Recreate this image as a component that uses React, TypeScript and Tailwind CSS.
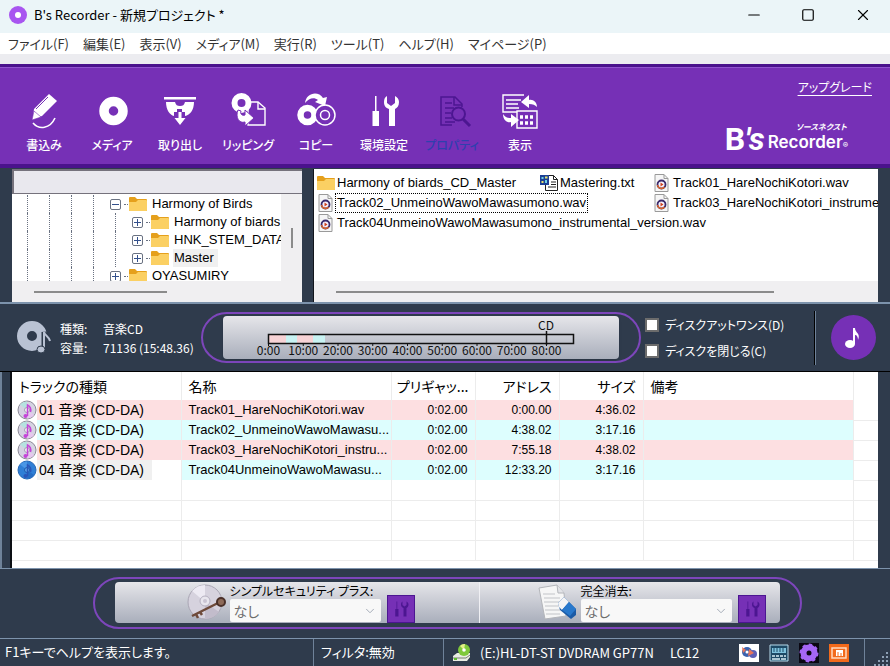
import React from 'react';
import { ChevronDown, Minus, Square, X } from 'lucide-react';

const MENU_ITEMS = [
  'ファイル(F)',
  '編集(E)',
  '表示(V)',
  'メディア(M)',
  '実行(R)',
  'ツール(T)',
  'ヘルプ(H)',
  'マイページ(P)',
];

interface Track {
  no: string;
  name: string;
  pregap: string;
  address: string;
  size: string;
}

const TRACKS: Track[] = [
  { no: '01', name: 'Track01_HareNochiKotori.wav', pregap: '0:02.00', address: '0:00.00', size: '4:36.02' },
  { no: '02', name: 'Track02_UnmeinoWawoMawasu...', pregap: '0:02.00', address: '4:38.02', size: '3:17.16' },
  { no: '03', name: 'Track03_HareNochiKotori_instru...', pregap: '0:02.00', address: '7:55.18', size: '4:38.02' },
  { no: '04', name: 'Track04UnmeinoWawoMawasu...', pregap: '0:02.00', address: '12:33.20', size: '3:17.16' },
];

const LATIN = "font-['Liberation_Sans','Noto_Sans_CJK_JP',sans-serif]";

const WriteIcon = () => (
  <svg className="size-10" viewBox="0 0 40 40" fill="none">
    <path d="M10 18 25 3l8 7-15 15-9 3z" fill="#fff" />
    <path d="M24 6 12 18" stroke="#7630b6" strokeWidth="1" />
    <path d="m8 29 2-9 7 6z" fill="#fff" stroke="#7630b6" strokeWidth=".6" />
    <path d="M9 32c6 7 17 6 22-5" stroke="#fff" strokeWidth="1.6" />
  </svg>
);

const MediaIcon = () => (
  <svg className="size-10" viewBox="0 0 40 40" fill="none">
    <circle cx="21.500" cy="20" r="9.5" stroke="#fff" strokeWidth="9.5" />
  </svg>
);

const EjectIcon = () => (
  <svg className="size-10" viewBox="0 0 40 40" fill="#fff">
    <path d="M4 6h32v2.500H4zM6 11h9c1 3 2 4 5 4s4-1 5-4h9c0 8-4 13-9 14v-4h-3v-3h-5v3h-3v4C10 24 6 19 6 11z" />
    <path d="M18.500 21h3v6h4l-5.500 7-5.500-7h4z" />
  </svg>
);

const RipIcon = () => (
  <svg className="size-10" viewBox="0 0 40 40" fill="none">
    <path d="M22 11h8l7 6v17H20V14" stroke="#fff" strokeWidth="1.400" />
    <path d="M30 11v7h7" stroke="#fff" strokeWidth="1.400" />
    <circle cx="13.500" cy="12" r="7" stroke="#fff" strokeWidth="6" />
    <path d="M10 19c-3 7 1 14 7 12v4l9-8-9-8v5c-3 1-5-1-4-4z" fill="#fff" stroke="#7630b6" strokeWidth="1" />
  </svg>
);

const CopyIcon = () => (
  <svg className="size-10" viewBox="0 0 40 40" fill="none">
    <circle cx="11.500" cy="24" r="7" stroke="#fff" strokeWidth="6.500" />
    <circle cx="29" cy="24" r="10" fill="#7630b6" stroke="#fff" strokeWidth="1.500" />
    <circle cx="29" cy="24" r="4.500" stroke="#fff" strokeWidth="1.500" />
    <path d="M9 12C10 2 22-1 27 7l4-1-2 9-10-4 3-2C18 6 13 7 9 12z" fill="#fff" />
  </svg>
);

const ToolsIcon = ({ className, color }: { className: string; color: string }) => (
  <svg className={className} viewBox="0 0 40 40" fill={color}>
    <path d="M11 5h1.500v15h2.500v15H8.500V20H11z" />
    <path d="M25 35V18c-3-1-5-3-5-7 0-3 1-5 3-6v7l4 3 4-3V5c2 1 4 3 4 6 0 4-2 6-4 7v17z" />
  </svg>
);

const PropertyIcon = () => (
  <svg className="size-10" viewBox="0 0 40 40" fill="none" stroke="#4c1691">
    <path d="M20 34H9V6h14l7 7v3" strokeWidth="1.500" />
    <path d="M22 6v8h8M13 12h7M13 17h9M13 22h6M13 27h7M13 31h10" strokeWidth="1.500" />
    <circle cx="26.500" cy="23" r="6.500" strokeWidth="2" />
    <path d="m31 28 7 7" strokeWidth="3" />
  </svg>
);

const ViewIcon = () => (
  <svg className="size-10" viewBox="0 0 40 40" fill="none" stroke="#fff" strokeWidth="1.400">
    <path d="M24 4H3v17h14M6 9h15M6 13h12M6 17h13" />
    <path d="M17 20h20v17H17z" />
    <path d="M20 26h3m2 0h3m2 0h3M20 32h3m2 0h3m2 0h3" strokeWidth="3.500" />
    <path d="M37 16c0-5-4-8-8-7V4l-8 7 8 6v-4c4 0 6 1 8 3z" fill="#fff" stroke="none" />
    <path d="M3 23c0 7 5 9 8 8v5l8-7-8-6v4c-4 0-6-1-8-4z" fill="#fff" stroke="none" />
  </svg>
);

const TOOLBAR = [
  { label: '書込み', icon: <WriteIcon /> },
  { label: 'メディア', icon: <MediaIcon /> },
  { label: '取り出し', icon: <EjectIcon /> },
  { label: 'リッピング', icon: <RipIcon /> },
  { label: 'コピー', icon: <CopyIcon /> },
  { label: '環境設定', icon: <ToolsIcon className="size-10" color="#fff" /> },
  { label: 'プロパティ', icon: <PropertyIcon />, disabled: true },
  { label: '表示', icon: <ViewIcon /> },
];

const FolderIcon = () => (
  <svg className="h-[18px] w-5 shrink-0" viewBox="0 0 20 18">
    <path d="M1 3q0-1 1-1h5l2 2h9q1 0 1 1v10q0 1-1 1H2q-1 0-1-1z" fill="#e5a01c" />
    <path d="M1 7h7l2-2h8q1 0 1 1v9q0 1-1 1H2q-1 0-1-1z" fill="#fbd063" />
  </svg>
);

const WavIcon = () => (
  <svg className="h-[18px] w-5 shrink-0" viewBox="0 0 20 18">
    <path d="M3 .5h9l4 4v13H3z" fill="#f6f6f6" stroke="#9a9a9a" />
    <path d="M12 .5v4h4" fill="none" stroke="#9a9a9a" />
    <circle cx="9.500" cy="10.500" r="4" fill="#f4f0ff" stroke="#3b2a6b" strokeWidth="1.800" />
    <path d="M5.500 11a4 4 0 0 0 7 2" fill="none" stroke="#d9642b" strokeWidth="1.600" />
    <path d="m8.500 8.500 3 2-3 2z" fill="#d0421b" />
  </svg>
);

const TxtIcon = () => (
  <svg className="h-[18px] w-5 shrink-0" viewBox="0 0 20 18">
    <path d="M6.500 1.500h8l4 4v11h-12z" fill="#fff" stroke="#222" />
    <path d="M14.500 1.500v4h4M12 8h5M12 10.500h5M9 13h8" fill="none" stroke="#222" />
    <path d="M1 1h9v10H1z" fill="#1c3f94" />
    <path d="M2.500 3h2v2h-2zM6 6h2v3H6z" fill="#6fd3e8" />
    <path d="M6 2.500h2.500v2H6zM2.500 7h2v2h-2z" fill="#e8e46f" />
  </svg>
);

const DiscIcon = ({ selected }: { selected?: boolean }) => (
  <svg className="size-5 shrink-0" viewBox="0 0 20 20">
    <circle cx="10" cy="10" r="9" fill={selected ? '#2f7fd6' : '#d5d3e2'} stroke={selected ? '#2567b5' : '#8d8a96'} />
    <path d="M10 10 3 4.500A9 9 0 0 1 10 1.500z" fill={selected ? '#4a97e6' : '#b6e3e0'} />
    <path d="m10 10 7 5a9 9 0 0 1-7 3.500z" fill={selected ? '#256dc4' : '#e6c8ee'} />
    <circle cx="10" cy="10" r="2.500" fill={selected ? '#5da3ea' : '#f4f2f8'} stroke={selected ? '#1f5cab' : '#a59fb4'} />
    <path d="M10.500 16V5c2 1 4 3 3 7" fill="none" stroke={selected ? '#2a56b8' : '#c445d8'} strokeWidth="1.500" />
    <circle cx="8.500" cy="16" r="2" fill={selected ? '#2a56b8' : '#c445d8'} />
  </svg>
);

const TREE = [
  { label: 'Harmony of Birds', depth: 4, open: true },
  { label: 'Harmony of biards', depth: 5 },
  { label: 'HNK_STEM_DATA', depth: 5 },
  { label: 'Master', depth: 5, selected: true },
  { label: 'OYASUMIRY', depth: 4 },
];

const FolderTree = () => (
  <div className={`flex w-[290px] shrink-0 flex-col bg-[#f0eff1] ${LATIN}`}>
    <div className="h-[25px] border-t-2 border-b border-l-2 border-[#75727c] bg-[#e9e8ee]" />
    <div className="flex">
      <ul className="h-[87px] flex-1 overflow-hidden bg-white pt-px pl-1">
        {TREE.map((node) => (
          <li key={node.label} className="flex h-[18px] items-center text-[13px] leading-[18px] whitespace-nowrap">
            {Array.from({ length: node.depth }, (_, i) => (
              <span key={i} className="flex h-full w-[22px] shrink-0 justify-center">
                <span className="border-l border-dotted border-gray-500" />
              </span>
            ))}
            <button
              aria-label={node.label}
              className="mr-[3px] ml-[6px] flex size-[11px] shrink-0 items-center justify-center rounded-xs border border-gray-500 bg-white"
            >
              <svg className="size-[7px]" viewBox="0 0 7 7" stroke="#33508c">
                <path d={node.open ? 'M0 3.500h7' : 'M0 3.500h7M3.500 0v7'} />
              </svg>
            </button>
            <span className="w-1 shrink-0 border-t border-dotted border-gray-500" />
            <FolderIcon />
            <span className={`ml-[3px] px-px ${node.selected ? 'bg-[#f0f0f0] pr-1' : ''}`}>{node.label}</span>
          </li>
        ))}
      </ul>
      <div className="flex w-[21px] items-center justify-center pt-0">
        <div className="h-5 w-0.5 bg-[#8b8b8b]" />
      </div>
    </div>
    <div className="flex h-[21px] items-center pl-[22px]">
      <div className="h-0.5 w-[133px] bg-[#8b8b8b]" />
    </div>
  </div>
);

const FileItem = ({ icon, name, focused }: { icon: React.ReactNode; name: string; focused?: boolean }) => (
  <li className="flex h-5 min-w-0 items-center whitespace-nowrap">
    {icon}
    <span className={`px-px leading-[18px] ${focused ? 'outline-1 outline-dotted outline-black' : ''}`}>{name}</span>
  </li>
);

const FileList = () => (
  <div
    className={`flex min-w-0 flex-1 flex-col justify-between overflow-hidden border-l border-[#11151c] bg-white ${LATIN}`}
  >
    <ul className="grid grid-cols-[223px_113px_1fr] pt-1 pl-0.5 text-[13px]">
      <FileItem icon={<FolderIcon />} name="Harmony of biards_CD_Master" />
      <FileItem icon={<TxtIcon />} name="Mastering.txt" />
      <FileItem icon={<WavIcon />} name="Track01_HareNochiKotori.wav" />
      <FileItem icon={<WavIcon />} name="Track02_UnmeinoWawoMawasumono.wav" focused />
      <li />
      <FileItem icon={<WavIcon />} name="Track03_HareNochiKotori_instrumental_version.wav" />
      <FileItem icon={<WavIcon />} name="Track04UnmeinoWawoMawasumono_instrumental_version.wav" />
    </ul>
    <div className="flex h-[21px] items-center bg-[#f0eff1] px-[22px]">
      <div className="h-0.5 w-[438px] bg-[#8b8b8b]" />
    </div>
  </div>
);

const MARKS = ['0:00', '10:00', '20:00', '30:00', '40:00', '50:00', '60:00', '70:00', '80:00'];

const CapacityGauge = () => (
  <div className="rounded-full border-2 border-[#7d46bb] px-5 py-0.5">
    <div className="rounded-sm bg-linear-to-b from-[#e6e6ea] to-[#a9aebb] shadow">
      <svg className="h-[43px] w-[396px]" viewBox="0 0 396 43">
        <path d="M46 19h17v8H46zM79 19h17v8H79z" fill="#f7d3d6" />
        <path d="M63 19h11v8H63zM90 19h12v8H90z" fill="#c9f3f3" />
        <path d="M74 19h16v8H74z" fill="#f7d3d6" />
        <path d="M45.500 18.500h305v9h-305z" fill="none" stroke="#111" strokeWidth="1.500" />
        <path d="M323.500 15v14" stroke="#111" strokeWidth="1.500" />
        {MARKS.map((mark, i) => (
          <g key={mark}>
            <path d={`M${45.5 + i * 34.75} 27v3`} stroke="#111" />
            <text x={45.5 + i * 34.75} y="39" textAnchor="middle" fontSize="12" fill="#111">
              {mark}
            </text>
          </g>
        ))}
        <text x="323" y="14" textAnchor="middle" fontSize="12" fill="#111">
          CD
        </text>
      </svg>
    </div>
  </div>
);

const DiscInfo = () => (
  <section className="flex h-[67px] items-center bg-[#2f3b4c] text-xs text-white">
    <svg className="ml-4 size-9 shrink-0" viewBox="0 0 36 36" fill="none">
      <circle cx="16" cy="16" r="10" stroke="#b9c2d3" strokeWidth="10" />
      <path d="M28 29V12c1 4 5 4 6 11" stroke="#2f3b4c" strokeWidth="5" />
      <path d="M28 29V12c1 4 5 4 6 9" stroke="#b9c2d3" strokeWidth="2" />
      <ellipse cx="25" cy="29.500" rx="4" ry="3.500" fill="#b9c2d3" stroke="#2f3b4c" />
    </svg>
    <dl className="ml-2 grid w-[141px] shrink-0 grid-cols-[43px_1fr] leading-[19px] whitespace-nowrap">
      <dt>種類:</dt>
      <dd>音楽CD</dd>
      <dt>容量:</dt>
      <dd>71136 (15:48.36)</dd>
    </dl>
    <CapacityGauge />
    <div className="ml-1 flex flex-col gap-[7px]">
      {['ディスクアットワンス(D)', 'ディスクを閉じる(C)'].map((label) => (
        <label key={label} className="flex items-center gap-[6px] text-xs leading-[19px] whitespace-nowrap">
          <input type="checkbox" className="size-[14px] appearance-none border-2 border-[#6c6c6c] bg-white" />
          {label}
        </label>
      ))}
    </div>
    <div className="mr-[14px] ml-auto flex items-center gap-[15px]">
      <div className="h-[54px] w-0.5 border-l border-black bg-[#6f8299]" />
      <button aria-label="音楽CD" className="flex size-[45px] items-center justify-center rounded-full bg-[#7630b6]">
        <svg className="size-7" viewBox="0 0 28 28" fill="#fff">
          <ellipse cx="10" cy="20" rx="5" ry="4" />
          <path d="M13 20V4h2c0 5 6 5 3 12 0-3-1-5-3-5v9z" />
        </svg>
      </button>
    </div>
  </section>
);

const CELL = 'border-r border-[#ececec]';

const TrackTable = () => (
  <div className="min-w-0 flex-1 overflow-hidden bg-white">
    <table className="w-full table-fixed border-collapse text-sm whitespace-nowrap">
      <colgroup>
        <col className="w-[169px]" />
        <col className="w-[210px]" />
        <col className="w-[84px]" />
        <col className="w-[84px]" />
        <col className="w-[84px]" />
        <col />
        <col className="w-[25px]" />
      </colgroup>
      <thead>
        <tr className="h-7 [&>th]:font-normal">
          <th className={`${CELL} pl-[7px] text-left`}>トラックの種類</th>
          <th className={`${CELL} pl-[7px] text-left`}>名称</th>
          <th className={`${CELL} pr-[6px] text-right`}>プリギャッ...</th>
          <th className={`${CELL} pr-[7px] text-right`}>アドレス</th>
          <th className={`${CELL} pr-[7px] text-right`}>サイズ</th>
          <th className={`${CELL} pl-[7px] text-left`}>備考</th>
          <th />
        </tr>
      </thead>
      <tbody className={LATIN}>
        {TRACKS.map((track, i) => {
          const selected = i === 3;
          const tint = i % 2 === 0 ? 'bg-[#fddfe1]' : 'bg-[#ddfefe]';
          return (
            <tr key={track.no} className="h-5 leading-5">
              <td className={`${CELL} p-0`}>
                <div className="flex h-5 pl-[5px]">
                  <DiscIcon selected={selected} />
                  <div className={selected ? 'flex-1' : `flex-1 ${tint}`}>
                    <span className={selected ? 'inline-block h-5 bg-[#f0f0f0] pr-2 pl-0.5' : 'pl-0.5'}>
                      {track.no} 音楽 (CD-DA)
                    </span>
                  </div>
                </div>
              </td>
              <td className={`${CELL} ${tint} pl-[7px] text-[13px]`}>{track.name}</td>
              <td className={`${CELL} ${tint} pr-[7px] text-right text-xs`}>{track.pregap}</td>
              <td className={`${CELL} ${tint} pr-[7px] text-right text-xs`}>{track.address}</td>
              <td className={`${CELL} ${tint} pr-[7px] text-right text-xs`}>{track.size}</td>
              <td className={`${CELL} ${tint}`} />
              <td className="border-b border-[#ececec]" />
            </tr>
          );
        })}
        {[0, 1, 2, 3].map((row) => (
          <tr key={row} className="h-5 border-b border-[#ececec]">
            {[0, 1, 2, 3, 4, 5].map((col) => (
              <td key={col} className={CELL} />
            ))}
            <td />
          </tr>
        ))}
      </tbody>
    </table>
  </div>
);

const DiscKeyIcon = () => (
  <svg className="size-10 shrink-0" viewBox="0 0 40 40">
    <circle cx="19" cy="19" r="17" fill="#d6d2de" stroke="#aaa6b4" />
    <path d="M19 19 6 8A17 17 0 0 1 19 2z" fill="#edeaf3" />
    <path d="m19 19 14 10a17 17 0 0 1-14 7z" fill="#c2bccb" />
    <circle cx="19" cy="18" r="5" fill="#e8e6ee" stroke="#b5b0c0" />
    <circle cx="19" cy="18" r="2" fill="#c9c4d2" />
    <path d="M34 19 6 33m4-2 2 4m2-6 2 3" fill="none" stroke="#6e4a3a" strokeWidth="2.500" />
    <circle cx="35" cy="19" r="4" fill="#8d6a58" stroke="#4a3028" strokeWidth="2" />
  </svg>
);

const EraseIcon = () => (
  <svg className="size-10 shrink-0" viewBox="0 0 40 40">
    <path d="m2 5 18-3 7 8 2 23-21 3z" fill="#f6f6f6" stroke="#b3b5ba" />
    <path d="m20 2 1 8h6" fill="#e3e4e8" stroke="#b3b5ba" />
    <path d="M6 11h12M7 15h16M7 19h16M8 23h15M8 27h15M9 31h14" stroke="#c2c4c8" />
    <path d="m21 20 6-6 12 12v6l-5 4-11-9z" fill="#1a5aa6" />
    <path d="m21 20 6-6 5 5-7 8-3-3z" fill="#f4f4f6" />
    <path d="m25 27 7-8 7 7-6 7z" fill="#2878cc" />
  </svg>
);

const OptionField = ({ id, label, icon }: { id: string; label: string; icon: React.ReactNode }) => (
  <div className="flex items-center gap-1">
    {icon}
    <div className="w-[151px]">
      <label htmlFor={id} className="block text-xs leading-[15px] whitespace-nowrap text-black">
        {label}
      </label>
      <div className="relative">
        <select
          id={id}
          className="h-[23px] w-full appearance-none rounded-xs bg-[#f8f8f8] pl-1 text-sm leading-5 text-[#6d6d6d]"
        >
          <option>なし</option>
        </select>
        <ChevronDown className="pointer-events-none absolute top-1.5 right-1 size-3.5 text-gray-400" strokeWidth={1.5} />
      </div>
    </div>
    <button
      aria-label={`${label} 設定`}
      className="ml-0.5 flex size-7 items-center justify-center self-end border border-[#4c1691] bg-[#7630b6]"
    >
      <ToolsIcon className="size-5" color="#4c1691" />
    </button>
  </div>
);

const OptionsBar = () => (
  <section className="flex h-[70px] justify-center border-t border-[#7d93ac] bg-[#2f3b4c] pt-2 pl-1">
    <div className="h-[52px] w-[709px] rounded-full border-2 border-[#7d46bb] px-5 pt-[3px]">
      <div className="flex h-[41px] rounded-sm bg-linear-to-b from-[#e6e6ea] to-[#a9aebb]">
        <div className="flex flex-1 items-center justify-end border-r border-[#f0f0f4] pr-16">
          <OptionField id="security" label="シンプルセキュリティ プラス:" icon={<DiscKeyIcon />} />
        </div>
        <div className="flex w-[300px] items-center justify-end pr-[14px]">
          <OptionField id="erase" label="完全消去:" icon={<EraseIcon />} />
        </div>
      </div>
    </div>
  </section>
);

const StatusBar = () => (
  <footer className="flex h-7 items-stretch border-t border-[#7d93ac] bg-[#2f3b4c] text-[13px] leading-[26px] whitespace-nowrap text-white">
    <span className="w-[314px] border-r border-[#6f8299] pl-[5px]">F1キーでヘルプを表示します。</span>
    <span className="w-[130px] border-r border-[#6f8299] pl-[7px]">フィルタ:無効</span>
    <span className="flex flex-1 items-center">
      <svg className="mr-2 ml-2 size-5" viewBox="0 0 20 20">
        <path d="m1 13 4-3h13v4l-3 4H1z" fill="#e9ece4" />
        <path d="M1 15h13l4-3" fill="none" stroke="#77806e" />
        <circle cx="12" cy="7" r="6" fill="#7fc93a" />
        <path d="M12 7 8 3a6 6 0 0 1 5-2z" fill="#e5f08a" />
        <circle cx="12" cy="7" r="1.800" fill="#fff" />
        <path d="M2 16h3" stroke="#5dbd2c" strokeWidth="2" />
      </svg>
      (E:)HL-DT-ST DVDRAM GP77N
      <span className="ml-4">LC12</span>
    </span>
    <div className="flex w-[126px] items-center gap-[10px] border-r border-[#6f8299]">
      <svg className="size-5" viewBox="0 0 20 20">
        <path d="M0 1h20v18H0z" fill="#fff" />
        <circle cx="8" cy="9" r="5" fill="#3a62ad" />
        <circle cx="14" cy="11" r="4" fill="#5e5fb5" />
        <path d="m3 4 4 3-3 3zM10 6l5 4-6 3z" fill="#e8755a" />
        <circle cx="8" cy="9" r="1.500" fill="#fff" />
      </svg>
      <svg className="size-5" viewBox="0 0 20 20">
        <path d="M1 2h18v16H1z" fill="#1d4a66" stroke="#b9dcec" />
        <path d="M3 5h14v5H3z" fill="#7fc4df" />
        <path d="M5 5v4m3-4v4m3-4v4m3-4v4" stroke="#1d4a66" />
        <path d="M3 13h3m1 0h3m1 0h3m1 0h2M3 16h8m1 0h5" stroke="#d8eef6" strokeWidth="1.500" />
      </svg>
      <svg className="size-5" viewBox="0 0 20 20">
        <path d="M0 0h20v20H0z" fill="#0a0712" />
        <circle cx="10" cy="10" r="5.500" fill="none" stroke="#a566f5" strokeWidth="6" />
        <circle cx="10" cy="10" r="8.500" fill="none" stroke="#a566f5" strokeWidth="2" strokeDasharray="3.300 3.300" />
      </svg>
      <svg className="size-5" viewBox="0 0 20 20">
        <path d="M0 1h20v18H0z" fill="#f26a1b" />
        <path d="M3 5h14v10H3z" fill="none" stroke="#ffd9bf" strokeWidth="1.500" />
        <path d="M7 7h7v6H7z" fill="#fff" />
        <path d="M9 13V9m3 4v-3" stroke="#f26a1b" />
      </svg>
    </div>
    <svg className="ml-[9px] size-4 self-end" viewBox="0 0 16 16" fill="#8ea0b5">
      <path d="M12 2h2v2h-2zM8 6h2v2H8zM12 6h2v2h-2zM4 10h2v2H4zM8 10h2v2H8zM12 10h2v2h-2zM0 14h2v2H0zM4 14h2v2H4zM8 14h2v2H8zM12 14h2v2h-2z" />
    </svg>
  </footer>
);

const App: React.FC = () => {
  return (
    <div className="flex min-h-screen flex-col bg-[#2f3b4c] font-['Noto_Sans_CJK_JP',sans-serif] text-black [font-feature-settings:'palt']">
      <header className="flex h-[33px] items-center bg-[#ebf5f8] pb-1">
        <svg className="ml-[9px] size-[18px]" viewBox="0 0 18 18">
          <circle cx="9" cy="9" r="9" fill="#a855f0" />
          <circle cx="9" cy="9" r="3" fill="#fff" />
        </svg>
        <h1 className="ml-[7px] text-[13px]">B's Recorder - 新規プロジェクト *</h1>
        <div className="ml-auto flex">
          <button aria-label="最小化" className="flex w-[54px] justify-center">
            <Minus className="size-[18px]" strokeWidth={1.5} />
          </button>
          <button aria-label="最大化" className="flex w-[54px] items-center justify-center">
            <Square className="size-3.5" strokeWidth={2} />
          </button>
          <button aria-label="閉じる" className="flex w-[55px] justify-center">
            <X className="size-[18px]" strokeWidth={1.5} />
          </button>
        </div>
      </header>

      <nav className="flex gap-[14px] border-b-[10px] border-[#ececf0] bg-white pl-2 text-[13px] leading-[21px] text-[#333]">
        {MENU_ITEMS.map((item) => (
          <button key={item}>{item}</button>
        ))}
      </nav>

      <div className="flex h-[104px] justify-between border-t-[3px] border-b-4 border-[#4a128c] bg-[#7630b6] shadow-[inset_0_1px_0_#9154cd]">
        <div className="flex pt-6 pl-[10px]">
          {TOOLBAR.map((tool) => (
            <button
              key={tool.label}
              disabled={tool.disabled}
              className={`flex w-[68px] flex-col items-center gap-1 text-xs font-medium ${
                tool.disabled ? 'text-[#2f3fae]' : 'text-white'
              }`}
            >
              {tool.icon}
              <span className="leading-5 whitespace-nowrap">{tool.label}</span>
            </button>
          ))}
        </div>
        <div className="flex flex-col items-end justify-between pt-[10px] pr-[18px] pb-2 text-white">
          <a href="#upgrade" className="text-xs leading-5 underline underline-offset-3">
            アップグレード
          </a>
          <div className="mr-6 flex items-end gap-[3px]">
            <span className="font-['Roboto',sans-serif] text-[32px] leading-[34px] font-bold">
              B<i>'s</i>
            </span>
            <div>
              <div className="pl-7 text-[8px] leading-[9px] font-bold italic">ソースネクスト</div>
              <div className="font-['Inter',sans-serif] text-[17px] leading-[22px] font-semibold">
                Recorder<span className="text-[8px]">®</span>
              </div>
            </div>
          </div>
        </div>
      </div>

      <section className="flex h-[136px] gap-[11px] border-b-2 border-[#7d93ac] bg-[#2f3b4c] px-3 pt-px">
        <FolderTree />
        <FileList />
      </section>

      <DiscInfo />

      <main className="flex flex-1 border-t border-black pr-3">
        <div className="mr-2 w-0.5 bg-[#6f8299]" />
        <div className="w-0.5 bg-[#0c0f14]" />
        <TrackTable />
      </main>

      <OptionsBar />
      <StatusBar />
    </div>
  );
};

export default App;
